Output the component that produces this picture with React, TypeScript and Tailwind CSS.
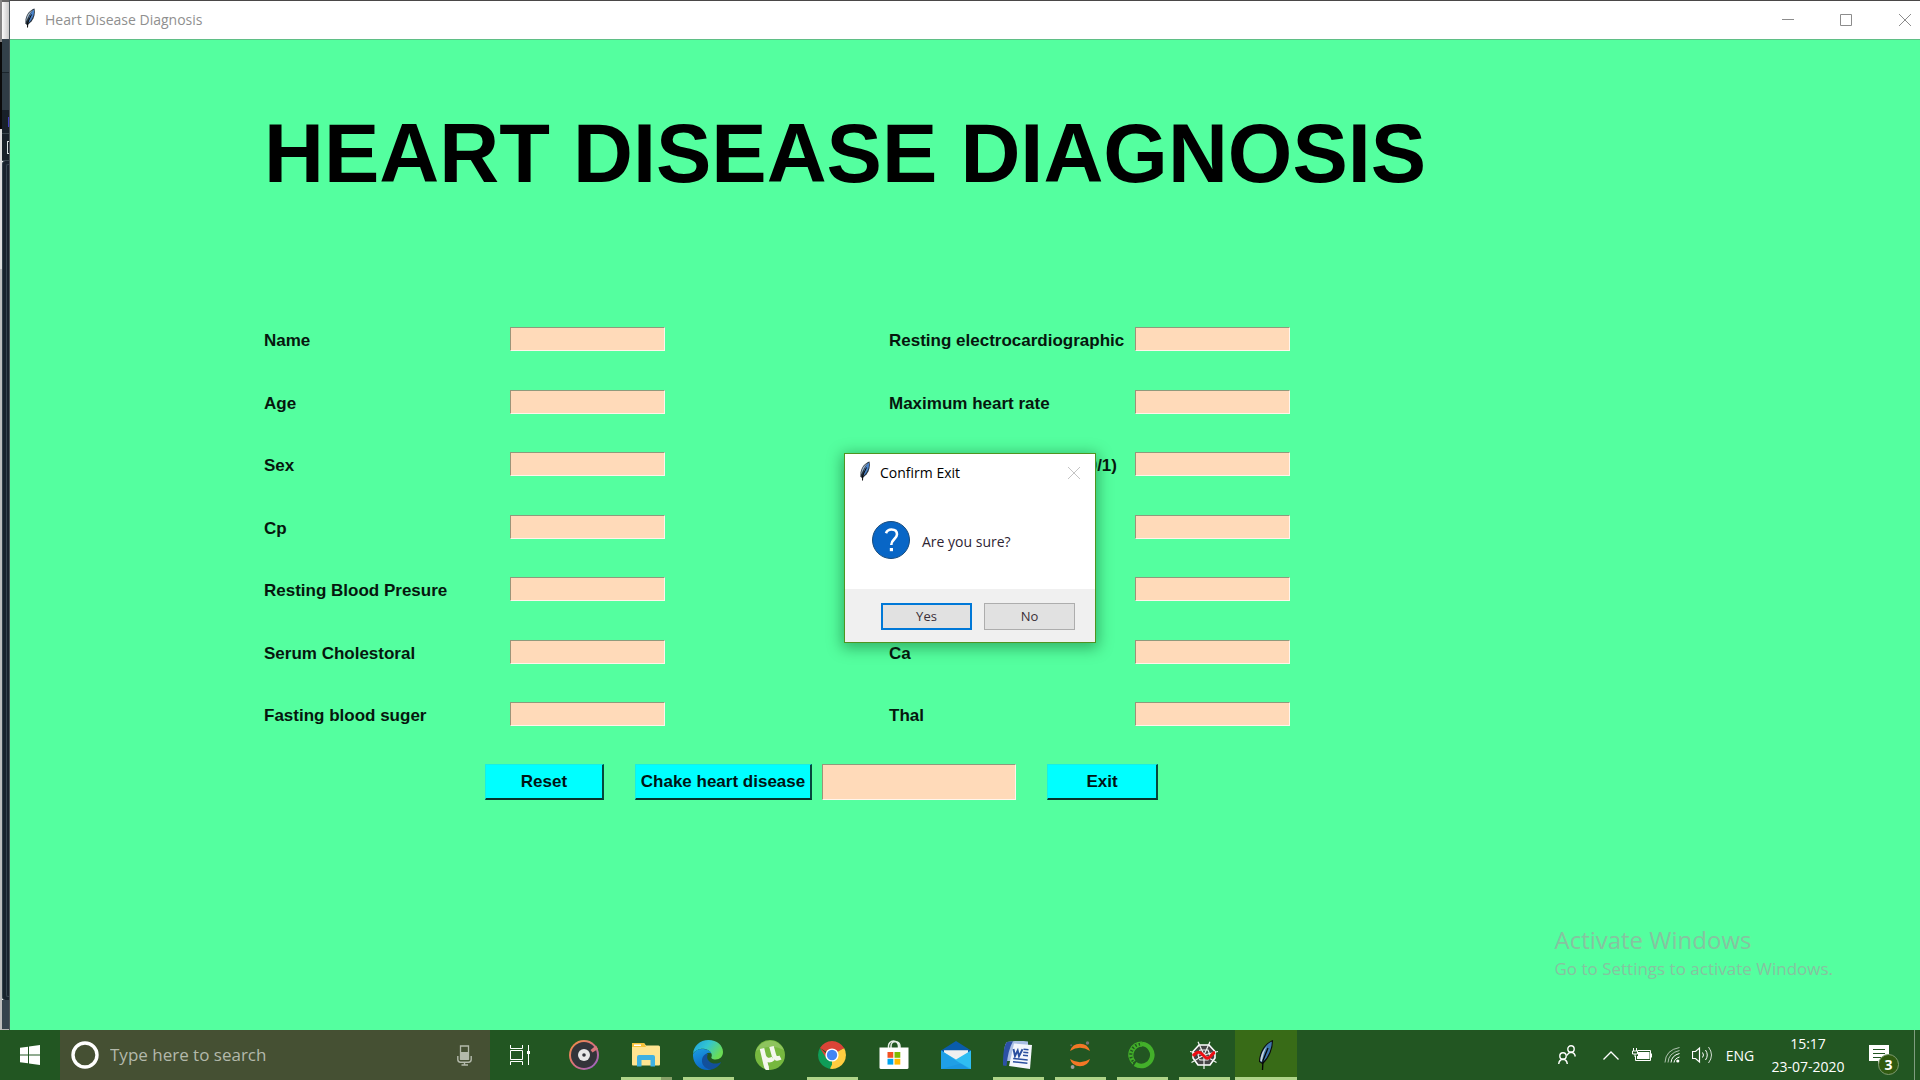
import React from "react";

const ui = "font-['Open_Sans','Noto_Sans',sans-serif]";

function Feather({ size }: { size: number }) {
  return (
    <svg width={size} height={size} viewBox="0 0 20 20" aria-hidden="true">
      <path d="M14.500.6C10.500 1.700 6.500 6 5.600 11.200L5.400 15.200 7.200 17.500 11.500 13.500C14.500 10 15.500 5 14.500.6Z" fill="#26313d" />
      <path d="M14 1.600C10.800 4 9 8 8.500 14.800 12.500 11.500 14.500 6.500 14 1.600Z" fill="#4a84cc" />
      <path d="M13 1.800C9 4 6.300 8 6.200 13.500 8 9.500 9.800 5.500 13 1.800Z" fill="#9fb3c4" />
      <path d="M11.500 6.500 7.800 14.500 7.500 19.500" stroke="#050505" strokeWidth="1" fill="none" />
    </svg>
  );
}

function TitleBar() {
  return (
    <header className="flex h-[39px] items-center border-b border-[#5fbf86] bg-white">
      <div className="ml-[10px] flex w-[25px] justify-start pb-1">
        <Feather size={20} />
      </div>
      <span className={`pb-[2px] text-[14px] text-[#8f8f8f] ${ui}`}>Heart Disease Diagnosis</span>
      <div className="ml-auto flex h-full text-[#8c8c8c]">
        <button aria-label="Minimize" className="flex w-[58px] items-center justify-center">
          <svg width="12" height="12" viewBox="0 0 12 12"><path d="M0 5.500H12" stroke="currentColor" /></svg>
        </button>
        <button aria-label="Maximize" className="flex w-[58px] items-center justify-center">
          <svg width="12" height="12" viewBox="0 0 12 12"><path d="M.5.5H11.500V11.500H.5Z" stroke="currentColor" fill="none" /></svg>
        </button>
        <button aria-label="Close" className="flex w-[45px] items-center justify-end pr-[9px]">
          <svg width="12" height="12" viewBox="0 0 12 12"><path d="M0 0 12 12M12 0 0 12" stroke="currentColor" /></svg>
        </button>
      </div>
    </header>
  );
}

type Field = { text: string; name?: string; end?: boolean };

const leftFields: Field[] = [
  { text: "Name" },
  { text: "Age" },
  { text: "Sex" },
  { text: "Cp" },
  { text: "Resting Blood Presure" },
  { text: "Serum Cholestoral" },
  { text: "Fasting blood suger" },
];
const rightFields: Field[] = [
  { text: "Resting electrocardiographic" },
  { text: "Maximum heart rate" },
  { text: "(0/1)", name: "Exercise induced angina (0/1)", end: true },
  { text: "", name: "Old peak" },
  { text: "", name: "Slope" },
  { text: "Ca" },
  { text: "Thal" },
];

const sunken = "border border-t-[#8f9a7c] border-l-[#9c9478] border-b-[#fff5ec] border-r-[#fff5ec] bg-[#ffdab9] outline-none";

function FieldColumn({ fields, prefix }: { fields: Field[]; prefix: string }) {
  return (
    <div className="flex h-[400px] flex-col justify-between">
      {fields.map((field, i) => (
        <div key={i} className="flex h-[25px] items-start">
          <label
            htmlFor={`${prefix}${i}`}
            className={`mr-[18px] w-[228px] pt-1 text-[17px] leading-5 font-bold whitespace-nowrap text-[#06170e] ${field.end ? "text-right" : ""}`}
          >
            {field.text}
          </label>
          <input id={`${prefix}${i}`} type="text" aria-label={field.name} className={`h-6 w-[155px] px-1 ${sunken}`} />
        </div>
      ))}
    </div>
  );
}

const raised = "h-9 border-t border-r-2 border-b-2 border-l border-t-[#18eee4] border-l-[#18eee4] border-r-[#06493d] border-b-[#06352e] bg-[#00ffff] text-[17px] font-bold text-[#001414] whitespace-nowrap";

function Dialog() {
  return (
    <section
      role="dialog"
      aria-label="Confirm Exit"
      className={`absolute top-[413px] left-[834px] flex h-[190px] w-[252px] flex-col border border-[#4f9420] bg-white shadow-[0_3px_14px_2px_rgba(0,60,20,0.4)] ${ui}`}
    >
      <div className="flex h-[37px] items-center pl-[10px]">
        <div className="w-[25px] pb-1"><Feather size={20} /></div>
        <span className="text-[14px] text-black">Confirm Exit</span>
        <button aria-label="Close dialog" className="mr-[15px] ml-auto text-[#c4c4c4]">
          <svg width="12" height="12" viewBox="0 0 12 12"><path d="M0 0 12 12M12 0 0 12" stroke="currentColor" /></svg>
        </button>
      </div>
      <div className="flex flex-1 items-center pl-[27px]">
        <svg width="38" height="38" viewBox="0 0 38 38" aria-hidden="true">
          <circle cx="19" cy="19" r="18.500" fill="#0866c6" stroke="#174b7d" />
          <path d="M14 12.200C15 9.400 17 8.500 19.400 8.500 22.800 8.500 25 10.300 25 13.200 25 18 19.300 18.200 19.300 24" stroke="#fff" strokeWidth="2.600" fill="none" />
          <path d="M17.800 27H21V30.200H17.800Z" fill="#fff" />
        </svg>
        <span className="pt-1 pl-3 text-[14px] leading-5 text-[#2e2433]">Are you sure?</span>
      </div>
      <div className="flex h-[53px] items-center justify-end gap-3 bg-[#f0f0f0] pt-px pr-5">
        <button className="h-[27px] w-[91px] border-2 border-[#0078d7] bg-[#e1e1e1] text-[13px] leading-none text-[#3a2f38]">Yes</button>
        <button className="h-[27px] w-[91px] border border-[#adadad] bg-[#e1e1e1] text-[13px] leading-none text-[#3a2f38]">No</button>
      </div>
    </section>
  );
}

function Backdrop() {
  return (
    <div className="flex w-[10px] shrink-0" aria-hidden="true">
      <div className="flex w-[2px] flex-col">
        <div className="h-[42px] bg-[#858585]" />
        <div className="h-[87px] bg-[#0b0b0b]" />
        <div className="h-[140px] bg-[#dedede]" />
        <div className="flex-1 bg-[#bdbdbd]" />
      </div>
      <div className="flex w-2 flex-col border-r border-[#4b5459]">
        <div className="h-[2px] bg-[#666666]" />
        <div className="h-[37px] bg-linear-to-r from-[#fafafa] to-[#c9c9c9]" />
        <div className="h-[34px] border-b border-[#1b252c] bg-[#33414a]" />
        <div className="h-[37px] bg-[#2f3c45]" />
        <div className="flex h-[24px] items-center justify-end border-b border-[#3a454d] bg-[#182029]"><div className="h-[10px] w-px bg-[#3f3dc0]" /></div>
        <div className="flex h-[27px] items-center justify-end border-b border-[#3a454d] bg-[#182029]"><div className="h-[13px] w-[2px] border-y border-l border-[#d8dde0]" /></div>
        <div className="flex flex-1 justify-end rounded-l-[3px] border-l border-[#33404a] bg-[#19222d] py-[3px]"><div className="w-[3px] rounded-l-[2px] border-y border-l border-[#38444f]" /></div>
        <div className="h-[30px] border-b border-[#b5b5b5] bg-[#35424d]" />
      </div>
    </div>
  );
}

function Slot({ label, underline, active, children }: { label: string; underline?: "one" | "stack"; active?: boolean; children: React.ReactNode }) {
  return (
    <button aria-label={label} className={`flex w-[62px] shrink-0 flex-col items-center ${active ? "bg-[#386b17]" : ""}`}>
      <span className="flex flex-1 items-center pt-[3px]">{children}</span>
      {underline === "one" && <span className={`h-[3px] bg-[#afd489] ${active ? "w-full" : "w-[51px]"}`} />}
      {underline === "stack" && (
        <span className="flex h-[3px] w-[51px]"><span className="w-10 bg-[#afd489]" /><span className="flex-1 bg-[#86a068]" /></span>
      )}
      {!underline && <span className="h-[3px]" />}
    </button>
  );
}

const GrooveIcon = () => (
  <svg width="30" height="30" viewBox="0 0 30 30">
    <defs>
      <linearGradient id="gr" x1="0" y1="0" x2="1" y2="1"><stop offset="0" stopColor="#f5923e" /><stop offset=".5" stopColor="#d9717e" /><stop offset="1" stopColor="#8a5fd0" /></linearGradient>
    </defs>
    <circle cx="15" cy="15" r="15" fill="url(#gr)" />
    <circle cx="15" cy="15" r="13" fill="#33343a" />
    <path d="M21.500 10 27 5.500 29 9 23.500 12.500Z" fill="#d9777b" />
    <circle cx="15" cy="15" r="6" fill="#e8e8e8" />
    <circle cx="15" cy="15" r="1.800" fill="#33343a" />
  </svg>
);

const FolderIcon = () => (
  <svg width="28" height="24" viewBox="0 0 28 24">
    <path d="M0 1Q0 0 1 0H12L14 2.500H26.500Q28 2.500 28 4V21.500Q28 22.500 27 22.500H1Q0 22.500 0 21.500Z" fill="#ffe591" />
    <path d="M0 1Q0 0 1 0H12L14 4H0Z" fill="#f8c33b" />
    <path d="M2 1.500H9V3H2Z" fill="#fff" />
    <path d="M5 23.500V14Q5 12 7 12H21Q23 12 23 14V23.500H18.500V17H9.500V23.500Z" fill="#3fb1e3" />
  </svg>
);

const EdgeIcon = () => (
  <svg width="30" height="30" viewBox="0 0 30 30">
    <defs>
      <linearGradient id="e1" x1="0" y1="0" x2="1" y2=".5"><stop offset="0" stopColor="#1b9de2" /><stop offset=".5" stopColor="#34c6cf" /><stop offset="1" stopColor="#6adc55" /></linearGradient>
      <linearGradient id="e2" x1="0" y1="0" x2=".4" y2="1"><stop offset="0" stopColor="#1b9de2" /><stop offset="1" stopColor="#0c66c4" /></linearGradient>
    </defs>
    <path d="M0 14C.5 6 7 0 15.500 0 24 0 30 5.500 30 12 30 16.500 27 19.500 22.500 19.500 19.500 19.500 17.800 18.300 18.500 17 20 14 17 10 12 9 7 8.200 2 10.500 0 14Z" fill="url(#e1)" />
    <path d="M0 14C2 10.500 6 8.500 10.500 9 14.500 9.200 17.500 11 18.300 13.500 15.500 11.500 11.500 14 12 18.500 12.500 23.500 17 26.500 22 26 20 28.500 17.500 30 14.500 30 6 30-.5 23 0 14Z" fill="url(#e2)" />
    <path d="M12 14.500C8.500 17 8 22 10.500 25.500 13 29 17.500 30.500 21.500 28.500 24.500 27.200 27 24.500 28.200 22 24 24.200 19 24 16.500 21.500 14 19.500 13.500 16.500 15 14.200 14 13.500 13 13.800 12 14.500Z" fill="#12509b" />
  </svg>
);

const TorrentIcon = () => (
  <svg width="30" height="30" viewBox="0 0 30 30">
    <circle cx="15" cy="15" r="15" fill="#76b83f" />
    <path d="M1 11A15 15 0 0 1 29 10Q15 3 1 11Z" fill="#8ec45e" />
    <path d="M7 8.500 10.500 23.500Q11.500 29 14 28.800M8.700 16C10 20 14.500 21.500 18 18.500M16.500 6.500 19 15.500Q20.500 20 25.500 17.500" stroke="#f4f7ef" strokeWidth="4.600" fill="none" />
  </svg>
);

const ChromeIcon = () => (
  <svg width="28" height="28" viewBox="0 0 28 28">
    <path d="M14 14 1.900 7A14 14 0 0 1 26.100 7Z" fill="#db4437" />
    <path d="M14 14 26.100 7A14 14 0 0 1 14 28L8 21Z" fill="#ffcd40" />
    <path d="M14 14 14 28A14 14 0 0 1 1.900 7L8 15Z" fill="#0f9d58" />
    <path d="M14 7.500H26.400L26.100 7 14 6ZM8.500 17.500 1.900 7H2L9 13Z" fill="#db4437" />
    <path d="M19.600 17.200 14 28 12 27.500 17 18Z" fill="#ffcd40" />
    <circle cx="14" cy="14" r="6.600" fill="#fff" />
    <circle cx="14" cy="14" r="5.200" fill="#4285f4" />
  </svg>
);

const StoreIcon = () => (
  <svg width="30" height="30" viewBox="0 0 30 30">
    <path d="M9.500 9V6A5 5 0 0 1 19.500 6V9M12 9V6A4.500 4.500 0 0 1 21 6V9" stroke="#e8eee8" strokeWidth="1.500" fill="none" />
    <path d="M.5 7.500H29.500V27.500Q29.500 29 28 29H2Q.5 29 .5 27.500Z" fill="#fff" />
    <path d="M8.500 12H14.300V17.800H8.500Z" fill="#f25022" /><path d="M15.500 12H21.300V17.800H15.500Z" fill="#7fba00" />
    <path d="M8.500 18.800H14.300V24.600H8.500Z" fill="#00a4ef" /><path d="M15.500 18.800H21.300V24.600H15.500Z" fill="#ffb900" />
  </svg>
);

const MailIcon = () => (
  <svg width="30" height="28" viewBox="0 0 30 28">
    <path d="M0 9.500 15 0 30 9.500V14H0Z" fill="#0a5cab" />
    <path d="M3 9.300H27V14L15 20 3 14Z" fill="#f0f0f0" />
    <path d="M0 9.500 15 18.500 30 9.500V28H0Z" fill="#2fbdf2" />
    <path d="M0 9.500 28 28H0Z" fill="#1f9fe6" />
    <path d="M0 28 20 22.500 30 28Z" fill="#188fdc" opacity=".5" />
  </svg>
);

const WordIcon = () => (
  <svg width="30" height="28" viewBox="0 0 30 28">
    <path d="M4 1Q15-1 25 .5V20H1C1 10 1 4 4 1Z" fill="#aabfe4" />
    <path d="M4 1Q8 .3 10 .3 5 9 3.500 25L0 24.500C0 13 1 4 4 1Z" fill="#2c51a5" />
    <path d="M11 2.500 29 4 27 28 6 25Z" fill="#f3f6fc" />
    <path d="M20.500 8.300 25.500 8.800M20.300 11.300 25.300 11.800M20 14.300 25 14.800M10.200 17.500 24.700 19M10 20.700 24.400 22.200" stroke="#2a4f9f" strokeWidth="1.500" />
    <path d="M10.500 8 12 15 14.700 9.500 16 15.200 19.500 8.300" stroke="#2a4f9f" strokeWidth="1.900" fill="none" />
  </svg>
);

const JupyterIcon = () => (
  <svg width="22" height="28" viewBox="0 0 22 28">
    <path d="M1 10A10.500 10.500 0 0 1 21 10Q11 3.500 1 10ZM1 18A10.500 10.500 0 0 0 21 18Q11 24.500 1 18Z" fill="#f37726" />
    <circle cx="18.500" cy="2" r="1.700" fill="#767677" /><circle cx="2.200" cy="4.200" r="1" fill="#616262" /><circle cx="3.600" cy="26" r="1.900" fill="#9e9e9e" />
  </svg>
);

const AnacondaIcon = () => (
  <svg width="28" height="28" viewBox="0 0 28 28">
    <path d="M14 3A11 11 0 1 1 7 23" stroke="#43b02a" strokeWidth="4.600" fill="none" />
    <path d="M14 1.200A12.500 12.500 0 0 0 5 23M14 5.200A9 9 0 0 0 7 20" stroke="#43b02a" strokeWidth="1.200" fill="none" />
    <path d="M14 3.200A10.700 10.700 0 0 0 5.500 21" stroke="#43b02a" strokeWidth="3.600" strokeDasharray="2 1.400" fill="none" />
  </svg>
);

const SpyderIcon = () => (
  <svg width="28" height="28" viewBox="0 0 28 28">
    <path d="M9 4H19L25 10.500V17L20 24H8L3 17V10.500Z" fill="#454545" stroke="#fff" strokeWidth="1.600" />
    <path d="M14 14 8 .8M14 14 20 .8M14 14 28 10.500M14 14 26.500 21.500M14 14V28M14 14 1.500 21.500M14 14 0 10.500M10 9H18L20 14 18 19H10L8 14Z" stroke="#f2f2f2" strokeWidth="1.200" fill="none" />
    <path d="M3 15C7 10 9.500 10.500 12 13S17 19 20 16 22.500 12 25 11.500" stroke="#ef0d12" strokeWidth="3" fill="none" />
  </svg>
);

const FeatherTask = () => (
  <svg width="16" height="30" viewBox="0 0 16 30">
    <path d="M14.500.8C8 3 2 11 1.500 21.500L4.500 23.500C11 18 14.500 8 14.500.8Z" fill="#3e76ae" stroke="#0c0c0c" strokeWidth="1.100" />
    <path d="M9 6C5 10 2.500 15 2.300 21L4 21.500C5 15 6.500 10 9 6Z" fill="#c6d3da" />
    <path d="M10 8 5 20.500 4.500 30" stroke="#050505" strokeWidth="1.300" fill="none" />
  </svg>
);

function Taskbar() {
  return (
    <footer className={`flex h-[50px] shrink-0 bg-[#225622] text-white ${ui}`}>
      <button aria-label="Start" className="flex w-[60px] shrink-0 items-center justify-center">
        <svg width="20" height="20" viewBox="0 0 20 20"><path d="M0 2.800 8 1.700V9.500H0ZM9 1.500 20 0V9.500H9ZM0 10.500H8V18.300L0 17.200ZM9 10.500H20V20L9 18.500Z" fill="#fff" /></svg>
      </button>
      <div className="flex w-[430px] shrink-0 items-center bg-[#455033] pr-[18px] pl-[10px]">
        <svg width="30" height="30" viewBox="0 0 30 30" aria-hidden="true"><circle cx="15" cy="15" r="12" stroke="#fff" strokeWidth="3.400" fill="none" /></svg>
        <input type="text" aria-label="Search" placeholder="Type here to search" className="ml-[10px] min-w-0 flex-1 bg-transparent text-[17px] outline-none placeholder:text-[#b3b9ab]" />
        <svg width="15" height="21" viewBox="0 0 15 21" fill="none" stroke="#b3b9ab" aria-hidden="true">
          <path d="M3.500 1H11.500V14H3.500Z" strokeWidth="1.300" /><path d="M3.500 7.500H11.500V14.500H3.500Z" fill="#b3b9ab" />
          <path d="M.8 11V14.500Q.8 17.200 3.500 17.200H11.500Q14.200 17.200 14.200 14.500V11M7.500 17V20M4.500 20H11" strokeWidth="1.400" />
        </svg>
      </div>
      <button aria-label="Task View" className="flex w-[63px] shrink-0 items-center justify-center pr-1">
        <svg width="20" height="20" viewBox="0 0 20 20" fill="none" stroke="#fff"><path d="M.5 0V3.500H12.500V0M.5 5.500H12.500V14.500H.5ZM.5 20V16.500H12.500V20M18.500 0V20" /><path d="M17 6H20V9H17Z" fill="#fff" stroke="none" /></svg>
      </button>
      <Slot label="Groove Music"><GrooveIcon /></Slot>
      <Slot label="File Explorer" underline="stack"><FolderIcon /></Slot>
      <Slot label="Edge" underline="one"><EdgeIcon /></Slot>
      <Slot label="uTorrent"><TorrentIcon /></Slot>
      <Slot label="Chrome" underline="one"><ChromeIcon /></Slot>
      <Slot label="Store"><StoreIcon /></Slot>
      <Slot label="Mail"><MailIcon /></Slot>
      <Slot label="Word" underline="one"><WordIcon /></Slot>
      <Slot label="Jupyter" underline="one"><JupyterIcon /></Slot>
      <Slot label="Anaconda" underline="one"><AnacondaIcon /></Slot>
      <Slot label="Spyder" underline="one"><SpyderIcon /></Slot>
      <Slot label="Heart Disease Diagnosis" underline="one" active><FeatherTask /></Slot>
      <div className="ml-auto flex items-center">
        <button aria-label="People" className="mr-2 flex w-[42px] justify-center">
          <svg width="18" height="20" viewBox="0 0 18 20" fill="none" stroke="#fff" strokeWidth="1.400"><circle cx="13" cy="4" r="3.200" /><path d="M8.800 10.500Q10.500 7.500 13 7.300 16.500 7.500 17.300 11.500" /><circle cx="5" cy="11" r="3.200" /><path d="M.7 19Q1.200 14.600 5 14.300 8.800 14.600 9.300 19" /></svg>
        </button>
        <button aria-label="Show hidden icons" className="flex w-[30px] justify-center">
          <svg width="16" height="9" viewBox="0 0 16 9"><path d="M.5 8.500 8 1 15.500 8.500" stroke="#fff" strokeWidth="1.300" fill="none" /></svg>
        </button>
        <button aria-label="Battery" className="flex w-[31px] justify-center">
          <svg width="20" height="14" viewBox="0 0 20 14"><path d="M5.500 2.500H18.500V12.500H3.500V8M19.500 5.500V9.500" stroke="#fff" fill="none" /><path d="M6 4H17.500V11H5V8H6Z" fill="#fff" /><path d="M1.500 0V3M4.500 0V3M.5 3H5.500V6H.5ZM3 6V9" stroke="#fff" fill="none" /></svg>
        </button>
        <button aria-label="Network" className="flex w-[30px] justify-center">
          <svg width="16" height="16" viewBox="0 0 16 16" fill="none" stroke="#fff"><path d="M10 15.500Q10.500 11.500 15.500 10" /><path d="M7 15.500Q7.500 8.500 15.500 6.500" /><path d="M4 15.500Q4.500 6 15.500 3.500M1 15.500Q1.500 3 15.500.5" opacity=".65" /><circle cx="13.800" cy="14" r="1.600" fill="#fff" stroke="none" /></svg>
        </button>
        <button aria-label="Volume" className="flex w-[30px] justify-center">
          <svg width="21" height="18" viewBox="0 0 21 18" fill="none" stroke="#fff"><path d="M.5 5.500H3.500L7.500 2V16L3.500 12.500H.5Z" strokeWidth="1.200" /><path d="M10.500 6.500Q12.500 9 10.500 11.500M13.500 4Q17 9 13.500 14" /><path d="M16.500 1Q22.500 9 16.500 17" opacity=".8" /></svg>
        </button>
        <button className="w-[46px] text-center text-[14px]">ENG</button>
        <div className="w-[90px] text-center text-[14px] leading-[23px]">
          <div>15:17</div>
          <div>23-07-2020</div>
        </div>
        <button aria-label="Notifications" className="mr-[9px] flex w-[52px] justify-center">
          <span className="relative block h-5 w-5">
            <svg width="20" height="20" viewBox="0 0 20 20"><path d="M0 0H20V16H13L9 20V16H0Z" fill="#fff" /><path d="M4 4.500H16M4 8.500H16M4 12.500H12" stroke="#225622" /></svg>
            <span className="absolute top-[9px] left-[9px] flex h-[21px] w-[21px] items-center justify-center rounded-full border border-[#7f9a70] bg-[#315a10] text-[14px] leading-none font-bold">3</span>
          </span>
        </button>
        <div className="mr-[5px] h-[50px] w-px bg-[#7f9c7f]" />
      </div>
    </footer>
  );
}

export default function App() {
  return (
    <div className="flex min-h-screen flex-col font-['Liberation_Sans',Arial,sans-serif]">
      <div className="flex flex-1">
        <Backdrop />
        <div className="flex min-w-0 flex-1 flex-col border-t border-[#4a4848]">
          <TitleBar />
          <main className="relative flex-1 bg-[#54ff9f] pl-[254px]">
            <h1 className="pt-[64px] text-[83px] leading-[100px] font-bold whitespace-nowrap text-black">HEART DISEASE DIAGNOSIS</h1>
            <div className="mt-[123px] flex gap-[224px]">
              <FieldColumn fields={leftFields} prefix="l" />
              <FieldColumn fields={rightFields} prefix="r" />
            </div>
            <div className="mt-[37px] flex items-center pl-[221px]">
              <button className={`w-[119px] ${raised}`}>Reset</button>
              <button className={`ml-[31px] w-[177px] ${raised}`}>Chake heart disease</button>
              <input type="text" aria-label="Result" className={`ml-[10px] h-9 w-[194px] px-1 ${sunken}`} />
              <button className={`ml-[31px] w-[111px] ${raised}`}>Exit</button>
            </div>
            <div className={`absolute right-[87px] bottom-[48px] whitespace-nowrap text-[#86c3a0] ${ui}`}>
              <div className="text-[24px] leading-8">Activate Windows</div>
              <div className="text-[17px] leading-[26px]">Go to Settings to activate Windows.</div>
            </div>
            <Dialog />
          </main>
        </div>
      </div>
      <Taskbar />
    </div>
  );
}
